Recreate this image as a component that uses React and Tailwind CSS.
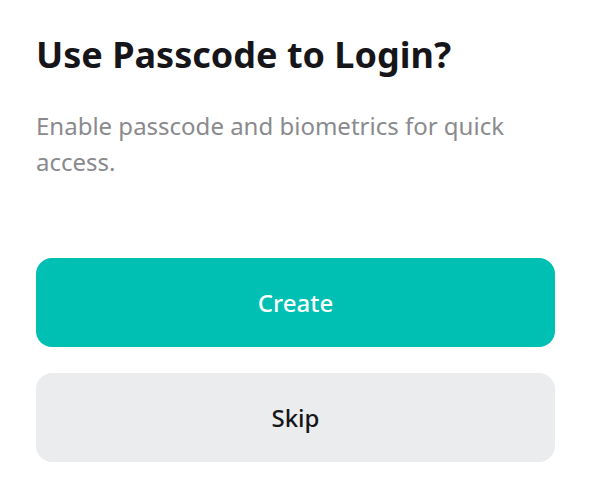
export default function App() {
  return (
    <div className="w-[591px] h-[500px] bg-white px-[36px] pt-[31px] overflow-hidden" style={{ fontFamily: '"Noto Sans", sans-serif' }}>
      <h1 className="text-[36px] leading-[48px] font-bold text-[#16161a]">Use Passcode to Login?</h1>
      <p className="mt-[29px] pr-[40px] text-[24px] leading-[36px] text-[#8a8a8e]">Enable passcode and biometrics for quick access.</p>
      <div className="mt-[78px] flex flex-col gap-[26px]">
        <button className="h-[89px] w-full rounded-[16px] bg-[#00bfb3] text-white text-[24px] font-medium">Create</button>
        <button className="h-[89px] w-full rounded-[16px] bg-[#ebecee] text-[#16161a] text-[24px] font-medium">Skip</button>
      </div>
    </div>
  );
}
